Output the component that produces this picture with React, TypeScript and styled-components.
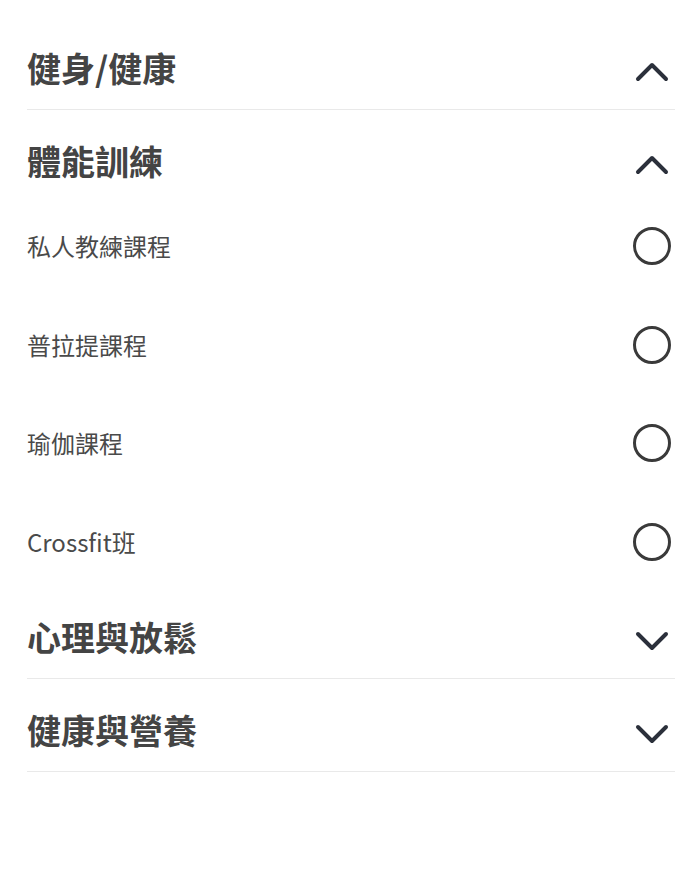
import React, { useState } from "react";
import styled, { createGlobalStyle } from "styled-components";

const GlobalStyle = createGlobalStyle`
  body {
    margin: 0;
    background: #ffffff;
    font-family: "Noto Sans CJK TC", "Noto Sans", sans-serif;
  }
`;

const Container = styled.div`
  padding: 17px 25px 0 27px;
`;

const Section = styled.div<{ $divider: boolean }>`
  border-bottom: ${(p) => (p.$divider ? "1px solid #e9e9e9" : "0")};
`;

const Header = styled.button<{ $open: boolean }>`
  display: flex;
  align-items: flex-start;
  justify-content: space-between;
  width: 100%;
  height: ${(p) => (p.$open ? "82px" : "92px")};
  padding: 33px 0 0;
  border: 0;
  background: transparent;
  cursor: pointer;
  font-family: inherit;
`;

const Title = styled.span`
  font-size: 34px;
  line-height: 36px;
  font-weight: 700;
  color: #444444;
`;

const IconBox = styled.span<{ $offset?: number; $h?: number }>`
  display: flex;
  align-items: center;
  justify-content: center;
  width: 46px;
  height: ${(p) => p.$h ?? 36}px;
  margin-top: ${(p) => p.$offset ?? 0}px;
`;

const List = styled.ul`
  margin: 0;
  padding: 0;
  list-style: none;
`;

const Item = styled.li`
  display: flex;
  align-items: flex-start;
  justify-content: space-between;
  height: 98.5px;
  padding-top: 35px;
  box-sizing: border-box;
  cursor: pointer;
`;

const ItemLabel = styled.span`
  font-size: 24px;
  line-height: 38px;
  color: #4a4a4a;
`;

const Radio = styled.span<{ $checked: boolean }>`
  display: block;
  width: 38px;
  height: 38px;
  box-sizing: border-box;
  border-radius: 50%;
  border: 3px solid #3a3a3a;
  background: ${(p) => (p.$checked ? "#3a3a3a" : "transparent")};
  box-shadow: ${(p) => (p.$checked ? "inset 0 0 0 6px #fff" : "none")};
`;

const Chevron = ({ up }: { up: boolean }) => (
  <svg width="36" height="22" viewBox="0 0 36 22" fill="none">
    <polyline
      points={up ? "4,18 18,4 32,18" : "4,4 18,18 32,4"}
      stroke="#2b303b"
      strokeWidth="4"
      strokeLinecap="round"
      strokeLinejoin="round"
    />
  </svg>
);

type Group = { title: string; items: string[] };

const groups: Group[] = [
  { title: "健身/健康", items: [] },
  { title: "體能訓練", items: ["私人教練課程", "普拉提課程", "瑜伽課程", "Crossfit班"] },
  { title: "心理與放鬆", items: [] },
  { title: "健康與營養", items: [] },
];

const App: React.FC = () => {
  const [open, setOpen] = useState<Record<string, boolean>>({
    "健身/健康": true,
    "體能訓練": true,
  });
  const [checked, setChecked] = useState<Record<string, boolean>>({});

  return (
    <>
      <GlobalStyle />
      <Container>
        {groups.map((g) => {
          const isOpen = !!open[g.title];
          const showList = isOpen && g.items.length > 0;
          return (
            <Section key={g.title} $divider={!showList}>
              <Header
                type="button"
                $open={showList}
                onClick={() => setOpen({ ...open, [g.title]: !isOpen })}
              >
                <Title>{g.title}</Title>
                <IconBox $offset={4}>
                  <Chevron up={isOpen} />
                </IconBox>
              </Header>
              {showList && (
                <List>
                  {g.items.map((item) => (
                    <Item
                      key={item}
                      onClick={() => setChecked({ ...checked, [item]: !checked[item] })}
                    >
                      <ItemLabel>{item}</ItemLabel>
                      <IconBox $h={38}>
                        <Radio $checked={!!checked[item]} />
                      </IconBox>
                    </Item>
                  ))}
                </List>
              )}
            </Section>
          );
        })}
      </Container>
    </>
  );
};

export default App;
